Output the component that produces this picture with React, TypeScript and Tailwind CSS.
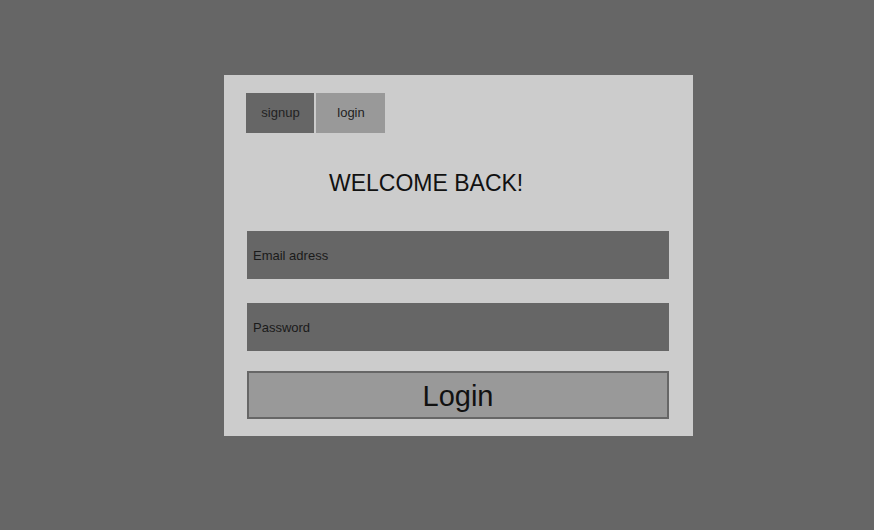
export default function App() {
  return (
    <div className="min-h-[530px] bg-[#666666] pl-[224px] pt-[75px] font-['Liberation_Sans',Arial,sans-serif]">
      <div className="w-[469px] bg-[#cccccc] pl-[22px] pr-[24px] pt-[18px] pb-[17px]">
        <div className="flex gap-[2px]">
          <button className="h-[40px] w-[68px] pl-[1px] bg-[#666666] text-[13px] text-[#222222]">
            signup
          </button>
          <button className="h-[40px] w-[69px] pl-[1px] bg-[#999999] text-[13px] text-[#222222]">
            login
          </button>
        </div>

        <h1 className="ml-[83px] mt-[36px] text-[23px] leading-[28px] text-[#111111]">
          WELCOME BACK!
        </h1>

        <div className="ml-[1px] mt-[34px] flex flex-col">
          <input
            placeholder="Email adress"
            className="h-[48px] w-[422px] bg-[#666666] px-[6px] text-[13px] text-[#111111] outline-none placeholder:text-[#1a1a1a]"
          />
          <input
            type="password"
            placeholder="Password"
            className="mt-[24px] h-[48px] w-[422px] bg-[#666666] px-[6px] text-[13px] text-[#111111] outline-none placeholder:text-[#1a1a1a]"
          />
          <button className="mt-[20px] h-[48px] w-[422px] border-2 border-[#666666] bg-[#999999] pt-[2px] text-[29px] text-[#111111]">
            Login
          </button>
        </div>
      </div>
    </div>
  );
}
